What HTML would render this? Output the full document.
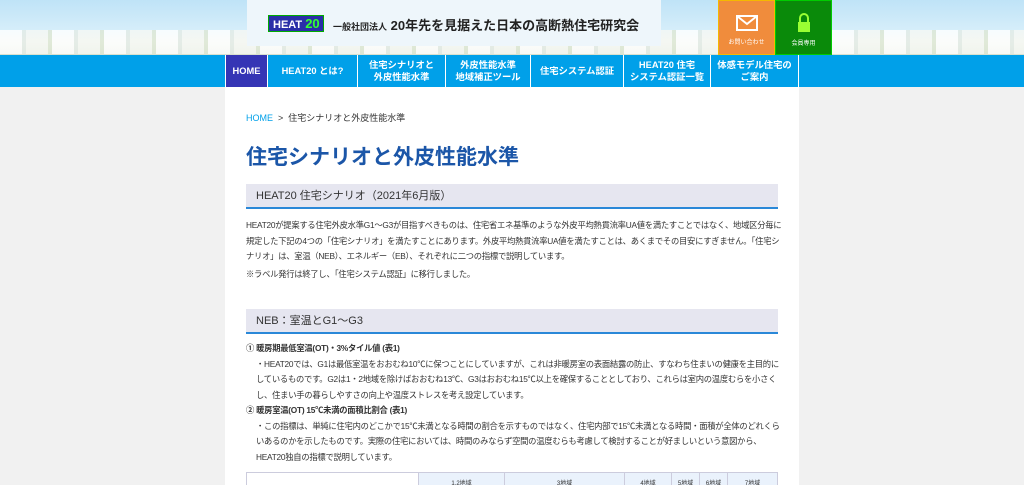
<!DOCTYPE html>
<html><head><meta charset="utf-8"><style>
*{margin:0;padding:0;box-sizing:border-box}
html,body{width:1024px;height:485px;overflow:hidden}
body{background:#f1f1f1;font-family:"Liberation Sans","Noto Sans CJK JP",sans-serif;color:#333;position:relative}
.hdr{position:absolute;left:0;top:0;width:1024px;height:56px;background:linear-gradient(#bfe3f7,#d6eefa 55%,#eef3ea 75%,#d8dfcc)}
.town{position:absolute;left:0;top:30px;width:1024px;height:24px;background:repeating-linear-gradient(90deg,#fff 0 22px,#e3ebe6 22px 26px,#f6f8f4 26px 48px,#dde7d4 48px 52px);opacity:.8}
.logo{position:absolute;left:247px;top:0;width:414px;height:46px;background:#eef6fb}
.hb{position:absolute;left:268px;top:15px;width:56px;height:17px;background:#2a2fa8;border:1px solid #0a0;color:#fff;font-size:11px;font-weight:bold;line-height:15px;padding-left:4px}
.hb b{color:#3f3;font-size:13px}
.tt{position:absolute;left:333px;top:15px;font-size:13px;font-weight:bold;color:#222}
.tt small{font-size:9px}
.btn{position:absolute;top:0;width:57px;height:55px;color:#fff;font-size:6px;text-align:center}
.nav{position:absolute;left:0;top:55px;width:1024px;height:32px;background:#00a0e9}
.nav div{position:absolute;top:0;height:32px;border-right:1px solid #fff;color:#fff;font-size:9.3px;font-weight:bold;text-align:center;display:flex;align-items:center;justify-content:center;line-height:12px}
.main{position:absolute;left:225px;top:87px;width:574px;height:398px;background:#fff}
.bc{position:absolute;left:246px;top:111px;font-size:9px}
.bc span{color:#00a0e9}
h1{position:absolute;left:246px;top:141px;font-size:21px;color:#1b56a8;font-weight:bold}
.h2{position:absolute;left:246px;width:532px;height:25px;background:#e6e6f0;border-bottom:2px solid #2a88d8;font-size:11px;line-height:24px;padding-left:10px;color:#333}
.p{position:absolute;left:246px;width:536px;font-size:8.3px;line-height:15.5px;color:#333;letter-spacing:-0.25px}
table{position:absolute;left:246px;top:472px;width:532px;border-collapse:collapse;font-size:6px}
td{border:1px solid #ccd;height:20px;text-align:center;vertical-align:top;padding-top:5px;background:#eaf2fc}
td:first-child{background:#fff}
</style></head><body>
<div class="hdr"><div class="town"></div></div>
<div class="logo"></div>
<div class="hb">HEAT <b>20</b></div>
<div class="tt"><small>一般社団法人</small> 20年先を見据えた日本の高断熱住宅研究会</div>
<div class="btn" style="left:718px;background:#f08c3c;border:1px solid #f5b800"><svg width="22" height="16" style="margin-top:14px" viewBox="0 0 22 16"><rect x="1" y="1" width="20" height="14" fill="none" stroke="#fff" stroke-width="2"/><path d="M1 1 L11 9 L21 1" fill="none" stroke="#fff" stroke-width="2"/></svg><div style="margin-top:4px">お問い合わせ</div></div>
<div class="btn" style="left:775px;background:#0a8a0a;border:1px solid #0c0"><svg width="14" height="20" style="margin-top:12px" viewBox="0 0 14 20"><path d="M3 9 V5 a4 4 0 0 1 8 0 V9" fill="none" stroke="#9f3" stroke-width="2"/><rect x="1" y="9" width="12" height="10" fill="#9f3"/></svg><div style="margin-top:3px">会員専用</div></div>
<div class="nav">
<div style="left:225px;width:43px;background:#3535b5;border-left:1px solid #fff">HOME</div>
<div style="left:268px;width:90px">HEAT20 とは?</div>
<div style="left:358px;width:88px">住宅シナリオと<br>外皮性能水準</div>
<div style="left:446px;width:85px">外皮性能水準<br>地域補正ツール</div>
<div style="left:531px;width:93px">住宅システム認証</div>
<div style="left:624px;width:87px">HEAT20 住宅<br>システム認証一覧</div>
<div style="left:711px;width:88px">体感モデル住宅の<br>ご案内</div>
</div>
<div class="main"></div>
<div class="bc"><span>HOME</span> &nbsp;&gt;&nbsp; 住宅シナリオと外皮性能水準</div>
<h1>住宅シナリオと外皮性能水準</h1>
<div class="h2" style="top:184px">HEAT20 住宅シナリオ（2021年6月版）</div>
<div class="p" style="top:218px">HEAT20が提案する住宅外皮水準G1～G3が目指すべきものは、住宅省エネ基準のような外皮平均熱貫流率UA値を満たすことではなく、地域区分毎に規定した下記の4つの「住宅シナリオ」を満たすことにあります。外皮平均熱貫流率UA値を満たすことは、あくまでその目安にすぎません。「住宅シナリオ」は、室温（NEB）、エネルギー（EB）、それぞれに二つの指標で説明しています。</div>
<div class="p" style="top:267px">※ラベル発行は終了し、「住宅システム認証」に移行しました。</div>
<div class="h2" style="top:309px">NEB：室温とG1～G3</div>
<div class="p" style="top:341px"><b>① 暖房期最低室温(OT)・3%タイル値 (表1)</b><div style="padding-left:10px">・HEAT20では、G1は最低室温をおおむね10℃に保つことにしていますが、これは非暖房室の表面結露の防止、すなわち住まいの健康を主目的にしているものです。G2は1・2地域を除けばおおむね13℃、G3はおおむね15℃以上を確保することとしており、これらは室内の温度むらを小さくし、住まい手の暮らしやすさの向上や温度ストレスを考え設定しています。</div><b>② 暖房室温(OT) 15℃未満の面積比割合 (表1)</b><div style="padding-left:10px">・この指標は、単純に住宅内のどこかで15℃未満となる時間の割合を示すものではなく、住宅内部で15℃未満となる時間・面積が全体のどれくらいあるのかを示したものです。実際の住宅においては、時間のみならず空間の温度むらも考慮して検討することが好ましいという意図から、HEAT20独自の指標で説明しています。</div></div>
<table><tr><td style="width:172px"></td><td style="width:86px">1.2地域</td><td style="width:120px">3地域</td><td style="width:47px">4地域</td><td style="width:28px">5地域</td><td style="width:28px">6地域</td><td>7地域</td></tr></table>
</body></html>
